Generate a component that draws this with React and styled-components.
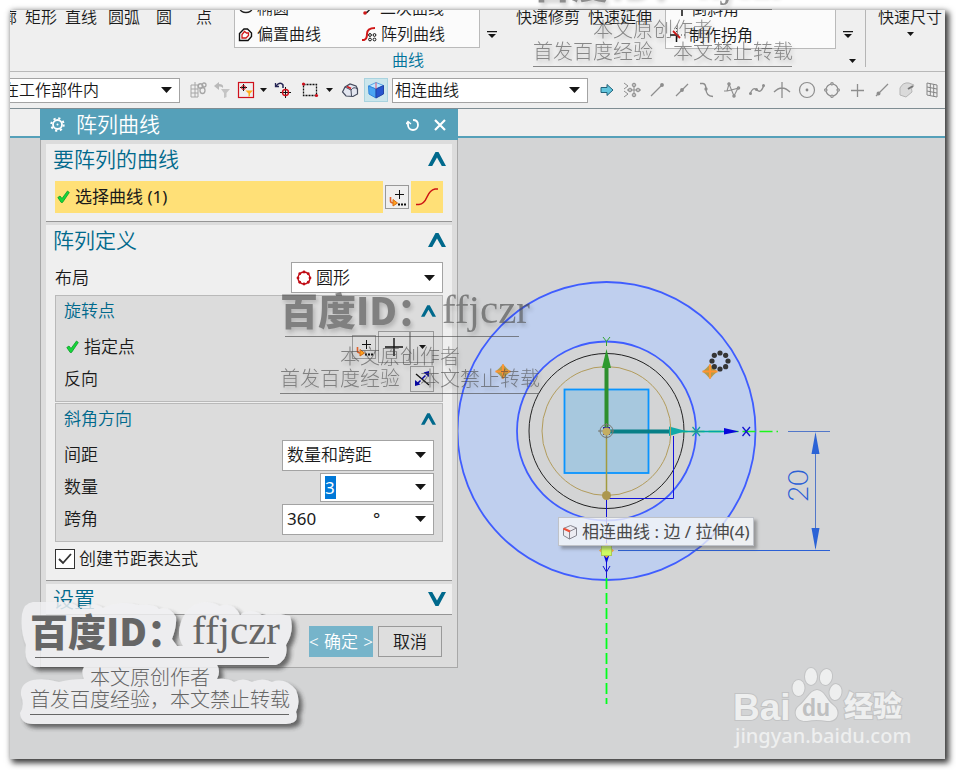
import React from "react";
import styled, { createGlobalStyle, css } from "styled-components";

const CJK = '"Noto Sans", "Noto Sans CJK SC", sans-serif';
const TEAL = "#55a0b9";
const INK = "#1a1a1a";
const LINK = "#00698c";

const GlobalStyle = createGlobalStyle`
  * { box-sizing: border-box; }
  body { margin: 0; background: #fff; overflow: hidden; }
  button, input, select { font: inherit; color: inherit; margin: 0; }
`;

const Desk = styled.main`
  position: relative;
  padding: 10px 11px 11px 10px;
  overflow: hidden;
  font: 16px/22px ${CJK};
  font-weight: 350;
  color: ${INK};
`;

const AppWindow = styled.div`
  position: relative;
  display: flex;
  flex-direction: column;
  min-height: calc(100vh - 21px);
  overflow: hidden;
  background: #efefef;
`;

const WindowShadow = styled.div`
  box-shadow: 3px 3px 6px 1px rgba(0, 0, 0, 0.75), 0 0 6px rgba(0, 0, 0, 0.15);
`;

/* ---------- ribbon ---------- */

const Ribbon = styled.header`
  display: flex;
  height: 62px;
  overflow: hidden;
  border-bottom: 1px solid #b8b8b8;
`;

const Labels = styled.div`
  display: flex;
  align-items: flex-start;
  flex: none;
  gap: ${(p) => p.$gap}px;
  width: ${(p) => p.$width}px;
`;

const RibbonButton = styled.button`
  display: flex;
  flex-direction: column;
  align-items: center;
  gap: 8px;
  padding: 0;
  margin-left: ${(p) => p.$lead || 0}px;
  border: 0;
  background: none;
  line-height: 14px;
  white-space: nowrap;
  flex: none;
`;

const GalleryGroup = styled.div`
  display: flex;
  flex-direction: column;
  flex: none;
  width: ${(p) => p.$width}px;
`;

const Gallery = styled.div`
  display: grid;
  grid-template-columns: ${(p) => p.$cols};
  grid-auto-rows: 26px;
  align-content: end;
  height: 39px;
  overflow: hidden;
  border: 1px solid #bababa;
  border-top: 0;
  background: #fbfbfb;
`;

const GalleryItem = styled.button`
  display: flex;
  align-items: center;
  gap: 4px;
  padding: 0 3px;
  border: 0;
  background: none;
  white-space: nowrap;
`;

const GroupName = styled.span`
  margin-top: 1px;
  padding-left: 158px;
  color: #00739b;
`;

const MoreColumn = styled.div`
  display: flex;
  flex-direction: column;
  gap: 16px;
  width: ${(p) => p.$width}px;
  padding: 20px 0 0 7px;
  flex: none;
`;

const BareButton = styled.button`
  display: flex;
  align-items: center;
  justify-content: center;
  width: ${(p) => p.$w || 10}px;
  height: ${(p) => p.$h || 10}px;
  padding: 0;
  border: 0;
  background: none;
  flex: none;
  margin-left: ${(p) => p.$lead || 0}px;
`;

const Divider = styled.div`
  width: 1px;
  height: 57px;
  margin-right: 12px;
  flex: none;
  background: #b5b5b5;
`;

/* ---------- selection bar ---------- */

const SelectionBar = styled.div`
  display: flex;
  align-items: center;
  height: 37px;
  border-bottom: 1px solid #7f8d93;
`;

const Combo = styled.div`
  display: grid;
  grid-template-columns: minmax(0, 1fr) 26px;
  align-items: center;
  flex: none;
  width: ${(p) => p.$width}px;
  height: ${(p) => p.$height || 31}px;
  margin: ${(p) => p.$margin || 0};
  border: 1px solid #a3a3a3;
  background: #fff;
  > svg { grid-area: 1 / 2; pointer-events: none; justify-self: center; }
`;

const Select = styled.select`
  grid-area: 1 / 1 / 2 / 3;
  width: 100%;
  height: 100%;
  padding: 0 0 0 ${(p) => p.$inset || 4}px;
  appearance: none;
  border: 0;
  outline: 0;
  background: transparent;
`;

const ComboIcon = styled.span`
  grid-area: 1 / 1;
  display: flex;
  padding-left: 4px;
  pointer-events: none;
`;

const Tool = styled.button`
  display: flex;
  align-items: center;
  justify-content: center;
  flex: none;
  width: ${(p) => p.$w || 25}px;
  height: 24px;
  padding: 0;
  border: 1px solid transparent;
  background: none;
  ${(p) => p.$on && css`border-color: #a9d3df; background: #cbe6ec;`}
`;

const Tabs = styled.div`
  height: 29px;
  border-bottom: 2px solid ${TEAL};
`;

const Canvas = styled.section`
  flex: 1;
  overflow: hidden;
  background: #d3d4d5;
  > svg { display: block; }
`;

/* ---------- dialog ---------- */

const Dialog = styled.form`
  position: absolute;
  left: 30px;
  top: 99px;
  width: 418px;
  font-size: 17px;
`;

const DialogHeader = styled.div`
  display: flex;
  align-items: center;
  height: 31px;
  padding: 0 9px 0 10px;
  background: ${TEAL};
  color: #fff;
`;

const DialogTitle = styled.h1`
  flex: 1;
  margin: 0 0 0 11px;
  font-size: 21px;
  font-weight: 350;
  line-height: 31px;
`;

const DialogBody = styled.div`
  display: flex;
  flex-direction: column;
  gap: 3px;
  padding: 4px 5px 10px;
  border: 1px solid #a8a8a8;
  border-top: 0;
  background: #dcdcdc;
`;

const Section = styled.section`
  display: flex;
  flex-direction: column;
  padding: 0 9px ${(p) => p.$bottom}px;
  border-bottom: 1px solid #959595;
  background: #efefef;
`;

const SectionHead = styled.div`
  display: flex;
  align-items: center;
  justify-content: space-between;
  height: 30px;
  margin: 0 -3px ${(p) => (p.$closed ? 0 : 7)}px -2px;
  color: ${LINK};
`;

const SectionTitle = styled.h2`
  margin: 0;
  font-size: 21px;
  font-weight: 350;
  line-height: 30px;
`;

const Row = styled.div`
  display: flex;
  align-items: center;
  gap: ${(p) => p.$gap || 0}px;
  height: ${(p) => p.$height || 32}px;
`;

const RowLabel = styled.label`
  display: flex;
  align-items: center;
  gap: 5px;
  flex: 1;
  padding-left: ${(p) => (p.$ticked ? 2 : 0)}px;
`;

const PickRow = styled.div`
  display: flex;
  align-items: center;
  gap: 5px;
  flex: 1;
  height: 32px;
  padding-left: 2px;
  background: #ffe077;
  font-weight: 400;
`;

const Group = styled.fieldset`
  margin: ${(p) => p.$top}px 0 0;
  padding: 0 8px 6px;
  border: 1px solid #b9b9b9;
  background: #dcdcdc;
`;

const GroupHead = styled.div`
  display: flex;
  align-items: center;
  justify-content: space-between;
  height: 29px;
  margin: 0 -2px 6px 0;
  color: ${LINK};
`;

const IconButton = styled.button`
  display: flex;
  align-items: center;
  justify-content: center;
  flex: none;
  width: ${(p) => p.$w || 24}px;
  height: ${(p) => p.$h || 24}px;
  padding: 0;
  border: ${(p) => (p.$hot ? 0 : "1px solid #999")};
  background: ${(p) => (p.$hot ? "#ffe077" : "transparent")};
  & + &[data-joined] { border-left: 0; }
`;

const SelectedInput = styled.input`
  width: 11px;
  height: 23px;
  margin-left: 4px;
  padding: 0;
  border: 0;
  outline: 0;
  background: #0078d7;
  color: #fff;
  font-weight: 400;
`;

const ValueCell = styled.span`
  grid-area: 1 / 1;
  display: flex;
  font-weight: 400;
`;

const AngleInput = styled.input`
  width: 90px;
  padding: 0 0 0 4px;
  border: 0;
  outline: 0;
  background: transparent;
`;

const CheckLabel = styled.label`
  display: flex;
  align-items: center;
  gap: 4px;
  height: 21px;
  margin-top: 6px;
`;

const CheckWrap = styled.span`
  display: grid;
  > * { grid-area: 1 / 1; }
  > svg { pointer-events: none; }
`;

const CheckBox = styled.input`
  width: 20px;
  height: 20px;
  appearance: none;
  border: 1px solid #333;
  background: #fff;
`;

const Footer = styled.div`
  display: flex;
  justify-content: flex-end;
  gap: 5px;
  padding: 8px 10px 0 0;
`;

const ActionButton = styled.button`
  width: 64px;
  height: 31px;
  padding: 0;
  display: flex;
  align-items: center;
  justify-content: ${(p) => (p.$primary ? "space-between" : "center")};
  border: ${(p) => (p.$primary ? "0" : "1px solid #999")};
  background: ${(p) => (p.$primary ? "#76b4ca" : "#dedede")};
  color: ${(p) => (p.$primary ? "#fff" : INK)};
`;

/* ---------- overlays ---------- */

const Tip = styled.div`
  position: absolute;
  left: 548px;
  top: 507px;
  display: flex;
  align-items: center;
  gap: 4px;
  height: 29px;
  padding: 0 4px 0 3px;
  border: 1px solid #bfc2c8;
  background: rgba(246, 247, 250, 0.78);
  box-shadow: 3px 3px 3px rgba(80, 80, 80, 0.45);
  font-size: 17px;
  font-weight: 400;
  color: #4a4a4a;
  white-space: pre;
`;

const Mark = styled.div`
  position: absolute;
  left: ${(p) => p.$x}px;
  top: ${(p) => p.$y}px;
  width: 259px;
  pointer-events: none;
  opacity: ${(p) => (p.$cloud ? 1 : 0.62)};
  text-shadow: ${(p) => (p.$cloud ? "none" : "2px 3px 4px rgba(0,0,0,0.3)")};
  color: ${(p) => (p.$cloud ? "#666" : "#484848")};
  > svg { position: absolute; left: -20px; top: -18px; }
`;

const MarkTitle = styled.div`
  position: relative;
  display: flex;
  height: 46px;
  margin: 0 20px 9px 5px;
  border-bottom: 1px solid currentColor;
  line-height: 36px;
  white-space: nowrap;
`;

const MarkId = styled.span`
  flex: none;
  width: 162px;
  margin-left: -5px;
  overflow: visible;
  font-size: 38px;
  font-weight: 900;
  font-family: "Noto Sans CJK SC", sans-serif;
`;

const MarkName = styled.span`
  font: 41px/36px "Liberation Serif", serif;
`;

const MarkLine = styled.div`
  position: relative;
  padding-left: ${(p) => p.$inset || 0}px;
  font-size: 20px;
  line-height: 22px;
  font-weight: 300;
  white-space: pre;
`;

const MarkRule = styled.div`
  position: relative;
  height: 4px;
  border-bottom: 1px solid currentColor;
`;

/* ---------- drawings ---------- */

const Svg = ({ s = 18, w = s, h = s, children, c = "#8e8e8e", sw = 1 }) => (
  <svg width={w} height={h} viewBox={`0 0 ${w} ${h}`} fill="none" stroke={c} strokeWidth={sw} aria-hidden="true">
    {children}
  </svg>
);

const Caret = ({ w = 11, h = 6 }) => (
  <svg width={w} height={h} viewBox="0 0 12 6" preserveAspectRatio="none" aria-hidden="true"><path d="M0 0H12L6 6Z" fill="#161616" /></svg>
);

const MoreCaret = () => (
  <svg width="10" height="8" viewBox="0 0 10 8" aria-hidden="true"><path d="M0 0H10V1.200H0ZM1 3H9L5 7Z" fill="#161616" /></svg>
);

const Chevron = ({ w = 18, h = 14, down }) => (
  <svg width={w} height={h} viewBox="0 0 18 14" aria-hidden="true">
    <path d={down ? "M0 0H4.200L9 8.500L13.800 0H18L10.500 14H7.500Z" : "M0 14H4.200L9 5.500L13.800 14H18L10.500 0H7.500Z"} fill="#00698c" />
  </svg>
);

const Tick = () => (
  <svg width="13" height="14" viewBox="0 0 13 14" aria-hidden="true">
    <path d="M.8 7.500L3 6L5 8.500L10.500 1L12.300 2.500L5.500 12.500L4.200 12.500Z" fill="#16d83a" stroke="#0b9a28" strokeWidth=".8" />
  </svg>
);

const PointDialog = () => (
  <Svg s={20}>
    <path d="M12.500 3v9M8 7.500h9" stroke="#111" />
    <path d="M3.500 10v4q0 2 3 2" stroke="#e0602a" strokeWidth="1.600" />
    <path d="M6 12.500L10.500 16L6 19Z" fill="#ffa41c" stroke="#d76b16" />
    <path d="M11 17.500h8" stroke="#111" strokeWidth="2" strokeDasharray="2 1" />
  </Svg>
);

const RedRing = () => (
  <Svg s={16}>
    <circle cx="8" cy="8" r="6" stroke="#c00b14" strokeWidth="1.300" />
    {[0, 45, 90, 135, 180, 225, 270, 315].map((a) => (
      <circle key={a} cx={8 + 6 * Math.cos((a * Math.PI) / 180)} cy={8 + 6 * Math.sin((a * Math.PI) / 180)} r="1.400" fill="#c00b14" stroke="none" />
    ))}
  </Svg>
);

const icons = {
  offset: (
    <Svg s={15}>
      <path d="M1.500 13.500V6.500L6 2H9.500L13.500 6V9.500L10 13.500Z" stroke="#111" strokeWidth="1.400" />
      <path d="M4 11V7.500L6.500 4.500L8.500 6H10.500V8.500L8 11Z" stroke="#d01818" strokeWidth="1.300" />
    </Svg>
  ),
  ellipse: <Svg w={15} h={14}><ellipse cx="8" cy="7.500" rx="6" ry="4" stroke="#222" strokeWidth="1.400" /></Svg>,
  conic: (
    <Svg s={15}>
      <path d="M4 12Q9 11 11 2" stroke="#222" strokeWidth="1.500" />
      <circle cx="4" cy="12" r="1.800" fill="#d01818" stroke="none" />
    </Svg>
  ),
  pattern: (
    <Svg s={16}>
      <path d="M1 14H3Q6 13 6 8Q6 2 14 2" stroke="#d01818" strokeWidth="2" />
      <g stroke="#111"><circle cx="9" cy="9" r="1.400" /><circle cx="13.500" cy="9" r="1.400" /><circle cx="9" cy="13.500" r="1.400" /><circle cx="13.500" cy="13.500" r="1.400" /></g>
    </Svg>
  ),
  chamfer: <Svg s={18}><path d="M13 2V16M13 6H9" stroke="#111" strokeWidth="1.500" /></Svg>,
  corner: (
    <Svg s={16}>
      <path d="M1 8h7M7.500 8V15" stroke="#111" strokeWidth="1.500" />
      <path d="M9 8h7M7.500 1v6" stroke="#444" strokeDasharray="1 2" />
      <path d="M4 4L11 11" stroke="#d01818" strokeWidth="1.800" />
    </Svg>
  ),
};

const tools = [
  [24, "装配", <Svg key="i" c="#a6a6a6"><path d="M2 4h7v12H2ZM2 8H9M2 12H9M6 1V16" /><circle cx="11.500" cy="5" r="2.300" strokeWidth="1.500" /><circle cx="15" cy="4" r="2" strokeWidth="1.300" /><ellipse cx="13.500" cy="9.500" rx="2.500" ry="3" strokeWidth="1.300" /></Svg>],
  [24, "重置过滤器", <Svg key="i"><path d="M1 5L6 1V3Q11 3 10 7Q9 5 6 5.500V9Z" fill="#b9b9b9" stroke="none" /><path d="M8 8H17L13.500 12V16L11 17V12Z" fill="#c4c4c4" stroke="none" /></Svg>],
  [24, "捕捉过滤", <Svg key="i" s={18}><rect x="1.500" y="1.500" width="15" height="15" stroke="#d0101c" strokeWidth="1.200" /><path d="M6.500 3v7M3 6.500h7" stroke="#111" /><circle cx="6.500" cy="6.500" r="2" stroke="#d0101c" /><path d="M8.500 9.500H16L13 12.500V15L11.500 16V12.500Z" fill="#ffae1a" stroke="none" /></Svg>],
  [11, "更多过滤", <Caret key="i" w={7} h={4} />],
  [28, "定向视图", <Svg key="i"><path d="M9 7V4Q7 1 4 3L2 5" stroke="#242454" strokeWidth="1.500" /><path d="M1.500 2V5.500H5" stroke="#242454" strokeWidth="1.300" /><path d="M11.500 6v11M6 11.500h11" stroke="#111" /><circle cx="11.500" cy="11.500" r="3" stroke="#d0101c" strokeWidth="1.400" /></Svg>],
  [25, "框选", <Svg key="i"><rect x="2.500" y="3.500" width="13" height="11" stroke="#111" strokeDasharray="2 1" strokeWidth="1.300" /><circle cx="2.500" cy="3" r="1.600" fill="#d0101c" stroke="none" /><circle cx="15.500" cy="14.500" r="1.600" fill="#d0101c" stroke="none" /></Svg>],
  [14, "更多选择", <Caret key="i" w={7} h={4} />],
  [28, "着色", <Svg key="i"><path d="M1.500 11L4 6L9 3L15 5L16.500 8V13L12 15.500L5 15Z" fill="#e3e6f0" stroke="#444a5c" strokeWidth="1.200" /><path d="M4 6L10 9L10.500 15M10 9Q13 5 16 8" stroke="#444a5c" /><path d="M6 5.500L10 7.500" stroke="#d01c20" strokeWidth="1.700" /></Svg>],
];

const snapTools = [
  ["捕捉点", <Svg key="i"><path d="M1 2l4 3-4 3M1 10l4 3-4 3" /><path d="M11 2v14M4 9h14" /><circle cx="11" cy="4" r="1.800" /><circle cx="11" cy="14" r="1.800" /><circle cx="7" cy="9" r="1.800" /><circle cx="15" cy="9" r="1.800" /></Svg>],
  ["端点", <Svg key="i" sw={1.2}><path d="M3 15L14 4" /><circle cx="14" cy="4" r="1.300" fill="#8a8a8a" /></Svg>],
  ["中点", <Svg key="i" sw={1.2}><path d="M3 15L15 3" /><circle cx="9" cy="9" r="1.300" fill="#8a8a8a" /></Svg>],
  ["控制点", <Svg key="i" sw={1.3}><path d="M2 2.500H5Q8 3 8 8Q8 15 15 15.500" /><circle cx="8" cy="8" r="1" fill="#8a8a8a" /></Svg>],
  ["极点", <Svg key="i" sw={1.1}><path d="M1 10H4L6 3L11 15L15 7M4 10L16 7" /><circle cx="6" cy="3" r="1.200" fill="#999" /><circle cx="11" cy="15" r="1.200" fill="#999" /><circle cx="15.500" cy="7" r="1.200" fill="#999" /></Svg>],
  ["定义点", <Svg key="i" sw={1.4}><path d="M2 13Q5 5 9 9T16 4" /><circle cx="2.500" cy="12.500" r=".8" /><circle cx="8.500" cy="8.500" r=".8" /><circle cx="15.500" cy="4.500" r=".8" /></Svg>],
  ["交点", <Svg key="i" sw={1.3}><path d="M9 1V17M1 11Q9 3 17 11" /></Svg>],
  ["圆心", <Svg key="i" sw={1.2}><circle cx="9" cy="9" r="7.500" /><circle cx="9" cy="9" r="1.400" fill="#888" stroke="none" /></Svg>],
  ["象限点", <Svg key="i" sw={1.2}><circle cx="9" cy="9" r="6" /><circle cx="9" cy="2.800" r="1.200" fill="#efefef" /><circle cx="9" cy="15.200" r="1.200" fill="#efefef" /><circle cx="2.800" cy="9" r="1.200" fill="#efefef" /><circle cx="15.200" cy="9" r="1.200" fill="#efefef" /></Svg>],
  ["现有点", <Svg key="i" sw={1.3}><path d="M9.500 3V16M3 9.500H16" /></Svg>],
  ["曲线上的点", <Svg key="i" sw={1.2}><path d="M3 15L15 3" /><circle cx="5.500" cy="12.500" r="1.400" fill="#8a8a8a" /></Svg>],
  ["面上的点", <Svg key="i" c="#b5b5b5"><path d="M2 7Q5 1 11 2L16 4Q12 8 14 11L8 16L2 14Z" fill="#dadada" /><path d="M10 8L15 5" stroke="#777" strokeWidth="2" /></Svg>],
  ["有界栅格", <Svg key="i" c="#858585"><path d="M4 2L14 4V16L4 14ZM7.300 2.700V14.700M10.700 3.300V15.300M4 6L14 8M4 10L14 12" /></Svg>],
];

const Gear = () => (
  <Svg s={15}>
    <circle cx="7.500" cy="7.500" r="4.500" stroke="#fff" strokeWidth="1.800" />
    <circle cx="7.500" cy="7.500" r="6.200" stroke="#fff" strokeWidth="2" strokeDasharray="2.200 2.669" />
    <circle cx="7.500" cy="7.500" r="1" fill="#fff" stroke="none" />
  </Svg>
);

const Star = ({ x }) => (
  <g transform={`translate(${x} 371.500)`}>
    <path d="M-7.500 0L-3.500 -3.500L0 -7.500L3.500 -3.500L7.500 0L3.500 3.500L0 7.500L-3.500 3.500Z" fill="#b69a49" />
    <path d="M-7.500 0H7.500M0 -7V7" stroke="#ff9430" strokeWidth="2" />
  </g>
);

const Model = () => (
  <svg width="935" height="621" viewBox="10 138 935 621" fill="none" role="img" aria-label="模型视图">
    <circle cx="606.500" cy="431" r="149" fill="#bfcfee" stroke="#3f5dff" strokeWidth="1.800" />
    <circle cx="606.500" cy="431" r="89.500" fill="#d3d4d5" stroke="#3f5dff" strokeWidth="1.800" />
    <circle cx="606.500" cy="431" r="77.500" stroke="#222" />
    <circle cx="606.500" cy="431" r="64.500" stroke="#b29c5c" />
    <rect x="564.500" y="389.500" width="84" height="83.500" fill="#a7c8de" stroke="#0994ff" strokeWidth="1.800" />
    <path d="M606.500 431.500H778" stroke="#1cf51c" strokeWidth="1.600" strokeDasharray="13 4" />
    <path d="M606.500 578V704" stroke="#00ff1c" strokeWidth="1.800" strokeDasharray="11 4" />
    <path d="M606.500 431.500H728" stroke="#00a6a6" strokeWidth="1.500" />
    <path d="M608 431.500H672" stroke="#087f86" strokeWidth="4" />
    <path d="M669 426.500L686 431L669 436Z" fill="#10aaa8" />
    <path d="M670.500 424V438" stroke="#b29c5c" />
    <path d="M607 498.500H673.500V436" stroke="#1414dc" />
    <path d="M606.500 495V578" stroke="#1111d6" />
    <path d="M606.500 431V494" stroke="#a29b3e" strokeWidth="1.500" />
    <path d="M606.500 430V365" stroke="#2d8f2d" strokeWidth="4" />
    <path d="M602 368L606.500 349L611 368Z" fill="#2e9a2e" />
    <path d="M603 337L606.500 341.500L610 337M606.500 341.500V346" stroke="#31a531" />
    <circle cx="606.500" cy="431" r="6.500" stroke="#77776e" />
    <path d="M598 431H614M606.500 423V439" stroke="#77776e" />
    <path d="M603 427H610V435H603Z" fill="#2222a0" />
    <circle cx="606.500" cy="431.500" r="4" fill="#c4ad62" />
    <circle cx="606.500" cy="495.500" r="4.500" fill="#ac974e" />
    <path d="M692.500 427L700 436M700 427L692.500 436M691 431.500H702" stroke="#179a9a" strokeWidth="1.200" />
    <path d="M724 428L739 431.500L724 434.500Z" fill="#0808dc" />
    <path d="M742.500 427L750 436M750 427L742.500 436" stroke="#1212d0" strokeWidth="1.300" />
    <path d="M603 566L606.500 572L610 566M606.500 572V578" stroke="#1515ce" />
    <path d="M604 556L606.500 564L609 556Z" fill="#0808dc" />
    <path d="M599 550.500L603 547L606.500 543L610 547L614 550.500L610 554L606.500 558L603 554Z" fill="#f7a344" />
    <rect x="601.500" y="545.500" width="10" height="10" fill="#cffb62" stroke="#abc957" />
    <path d="M618 550.500H830" stroke="#2b60d5" />
    <path d="M788 431.500H830M815.500 434V548" stroke="#5277c9" />
    <path d="M811.500 454L815.500 432L819.500 454ZM811.500 528L815.500 550L819.500 528Z" fill="#2b63d6" />
    <text transform="rotate(-90 808 502)" x="808" y="502" fill="#2b60d5" fontFamily="Liberation Sans Narrow, Lato" fontWeight="300" fontSize="28">20</text>
    <Star x={503} />
    <Star x={710} />
    {[0, 45, 90, 135, 180, 225, 270, 315].map((a) => (
      <circle key={a} cx={720 + 8 * Math.cos((a * Math.PI) / 180)} cy={361 + 8 * Math.sin((a * Math.PI) / 180)} r="2.600" fill="#353535" />
    ))}
    <g fill="#eeefef" stroke="#c2c3c4" strokeWidth="2" paintOrder="stroke">
      <ellipse cx="798.500" cy="688" rx="6" ry="8" />
      <ellipse cx="811" cy="676.500" rx="6" ry="8.500" />
      <ellipse cx="826" cy="677" rx="6" ry="8" transform="rotate(12 826 677)" />
      <ellipse cx="835.500" cy="692" rx="6" ry="8" transform="rotate(8 835 692)" />
      <path d="M817 690C825 691 826 700 833 705C841 711 838 722 827 721Q816 719 807 721C795 722 793 711 799 706C807 700 809 691 817 690Z" />
      <text x="733" y="720" fontFamily="Liberation Sans" fontWeight="700" fontSize="37">Bai</text>
      <text x="844" y="717" fontFamily="Noto Sans CJK SC" fontWeight="900" fontSize="29">经验</text>
    </g>
    <text x="735" y="743" fill="#eeefef" fontFamily="Noto Sans" fontWeight="500" fontSize="20">jingyan.baidu.com</text>
    <text x="802" y="716" fill="#bfc0c1" fontFamily="Liberation Sans" fontWeight="700" fontSize="23">du</text>
  </svg>
);

const Cloud = () => (
  <svg width="310" height="150" viewBox="10 595 310 150" aria-hidden="true">
    <defs>
      <filter id="cloudShadow" x="-10%" y="-10%" width="120%" height="125%">
        <feDropShadow dx="4" dy="4" stdDeviation="2" floodColor="#333" floodOpacity=".8" />
      </filter>
    </defs>
    <g filter="url(#cloudShadow)" opacity=".84">
      <path
        fill="#f1f1f3"
        d="M33 603H68Q75 605 81 610Q91 601 103 609Q120 601 138 606Q155 605 159 610Q170 607 176 618Q177 627 172 640L177 647H183Q177 637 180 627Q185 605 205 603Q213 603 220 607Q233 602 240 616Q250 608 262 616Q273 612 290 617Q295 632 286 646Q289 661 276 666H217Q221 672 217 680Q228 679 234 683Q243 678 252 683Q263 678 272 683Q285 678 296 691Q301 703 296 713Q300 724 286 725H33Q21 725 20 714Q25 707 21 696Q20 684 33 681Q45 679 59 683Q70 680 84 680Q81 673 84 668H35Q23 664 26 646Q20 632 22 615Q24 604 33 603Z"
      />
    </g>
  </svg>
);

function Watermark({ x, y, cloud }) {
  return (
    <Mark $x={x} $y={y} $cloud={cloud} aria-hidden="true">
      {cloud && <Cloud />}
      <MarkTitle>
        <MarkId>百度ID：</MarkId>
        <MarkName>ffjczr</MarkName>
      </MarkTitle>
      <MarkLine $inset={60}>本文原创作者</MarkLine>
      <MarkLine>{cloud ? "首发百度经验，本文禁止转载" : "首发百度经验　本文禁止转载"}</MarkLine>
      <MarkRule />
    </Mark>
  );
}

function RibbonBar() {
  return (
    <Ribbon>
      <Labels $gap={0} $width={224}>
        <RibbonButton $lead={-25}>轮廓</RibbonButton>
        <RibbonButton $lead={8}>矩形</RibbonButton>
        <RibbonButton $lead={8}>直线</RibbonButton>
        <RibbonButton $lead={11}>圆弧</RibbonButton>
        <RibbonButton $lead={16}>圆</RibbonButton>
        <RibbonButton $lead={24}>点</RibbonButton>
      </Labels>
      <GalleryGroup $width={246}>
        <Gallery $cols="123px 1fr">
          <GalleryItem>{icons.ellipse}椭圆</GalleryItem>
          <GalleryItem>{icons.conic}二次曲线</GalleryItem>
          <GalleryItem>{icons.offset}偏置曲线</GalleryItem>
          <GalleryItem>{icons.pattern}阵列曲线</GalleryItem>
        </Gallery>
        <GroupName>曲线</GroupName>
      </GalleryGroup>
      <MoreColumn $width={36}>
        <BareButton aria-label="更多曲线"><MoreCaret /></BareButton>
      </MoreColumn>
      <Labels $gap={8} $width={149}>
        <RibbonButton>快速修剪</RibbonButton>
        <RibbonButton>快速延伸</RibbonButton>
      </Labels>
      <GalleryGroup $width={171}>
        <Gallery $cols="1fr">
          <GalleryItem>{icons.chamfer}倒斜角</GalleryItem>
          <GalleryItem>{icons.corner}制作拐角</GalleryItem>
        </Gallery>
      </GalleryGroup>
      <MoreColumn $width={29}>
        <BareButton aria-label="更多编辑"><MoreCaret /></BareButton>
        <BareButton $lead={4} aria-label="组选项"><Caret w={7} h={4} /></BareButton>
      </MoreColumn>
      <Divider />
      <Labels $gap={0} $width={67}>
        <RibbonButton>快速尺寸<Caret w={7} h={4} /></RibbonButton>
      </Labels>
    </Ribbon>
  );
}

function Tools() {
  return (
    <SelectionBar>
      <Combo $width={182} $height={25} $margin="0 6px 0 -12px">
        <Select $inset={4} aria-label="选择范围"><option>在工作部件内</option></Select>
        <Caret />
      </Combo>
      {tools.map(([w, label, icon]) => <Tool key={label} $w={w} aria-label={label}>{icon}</Tool>)}
      <Tool $w={24} $on aria-label="体">
        <Svg>
          <path d="M1.500 5L9 1.500L16.500 4.500L9 8Z" fill="#bfe7ff" stroke="#5aa4e6" />
          <path d="M1.500 5L9 8V17L2 13Z" fill="#4aa5f3" stroke="#3185db" />
          <path d="M9 8L16.500 4.500V13L9 17Z" fill="#2756cf" stroke="#2345a5" />
          <path d="M9 1.500V8" stroke="#e0506a" />
        </Svg>
      </Tool>
      <Combo $width={196} $height={25} $margin="0 6px 0 4px">
        <Select $inset={2} aria-label="曲线规则"><option>相连曲线</option></Select>
        <Caret />
      </Combo>
      <Tool $w={25} aria-label="在相交处停止">
        <Svg><path d="M3 6.500H9V3.500L15 9L9 14.500V11.500H3Z" fill="#62c5dd" stroke="#22637a" /></Svg>
      </Tool>
      {snapTools.map(([label, icon]) => <Tool key={label} aria-label={label}>{icon}</Tool>)}
    </SelectionBar>
  );
}

function PatternDialog() {
  return (
    <Dialog onSubmit={(e) => e.preventDefault()}>
      <DialogHeader>
        <BareButton type="button" $w={15} $h={20} aria-label="选项"><Gear /></BareButton>
        <DialogTitle>阵列曲线</DialogTitle>
        <BareButton type="button" $w={18} $h={20} aria-label="重置">
          <Svg s={14} c="#fff" sw={1.8}><path d="M7 2Q12 2 12 7A5 5 0 0 1 2 7V4" /><path d="M0 6L2 3.500L5 6" strokeWidth="1.300" /></Svg>
        </BareButton>
        <BareButton type="button" $w={18} $h={20} $lead={9} aria-label="关闭">
          <Svg s={14} c="#fff" sw={2.2}><path d="M2 2L12 12M12 2L2 12" /></Svg>
        </BareButton>
      </DialogHeader>
      <DialogBody>
        <Section $bottom={8}>
          <SectionHead><SectionTitle>要阵列的曲线</SectionTitle><BareButton type="button" $w={18} $h={14} aria-label="折叠"><Chevron /></BareButton></SectionHead>
          <Row $gap={2}>
            <PickRow><Tick />选择曲线 (1)</PickRow>
            <IconButton type="button" aria-label="点对话框"><PointDialog /></IconButton>
            <IconButton type="button" $w={32} $h={32} $hot aria-label="曲线">
              <Svg s={24} c="#cc1414" sw={1.5}><path d="M1 19.500H4Q9 19 12 12T20 4H23" /></Svg>
            </IconButton>
          </Row>
        </Section>
        <Section $bottom={11}>
          <SectionHead><SectionTitle>阵列定义</SectionTitle><BareButton type="button" $w={18} $h={14} aria-label="折叠"><Chevron /></BareButton></SectionHead>
          <Row $height={31}>
            <RowLabel htmlFor="layout">布局</RowLabel>
            <Combo $width={152}>
              <ComboIcon><RedRing /></ComboIcon>
              <Select id="layout" $inset={24}><option>圆形</option></Select>
              <Caret />
            </Combo>
          </Row>
          <Group $top={2}>
            <GroupHead>旋转点<BareButton type="button" $w={15} $h={12} aria-label="折叠"><Chevron w={15} h={12} /></BareButton></GroupHead>
            <Row $gap={2}>
              <RowLabel as="span" $ticked><Tick />指定点</RowLabel>
              <IconButton type="button" aria-label="点对话框"><PointDialog /></IconButton>
              <Row>
                <IconButton type="button" $w={32} $h={32} aria-label="自动判断的点">
                  <Svg c="#111" sw={1.4}><path d="M9 0V18M0 9H18" /></Svg>
                </IconButton>
                <IconButton type="button" data-joined $w={24} $h={32} aria-label="点类型"><Caret w={7} h={4} /></IconButton>
              </Row>
            </Row>
            <Row>
              <RowLabel as="span">反向</RowLabel>
              <IconButton type="button" $h={26} aria-label="反向">
                <Svg s={18}><path d="M3 4L16 15" stroke="#111" strokeWidth="1.300" /><path d="M4 14L14 4" stroke="#0808a0" strokeWidth="1.500" strokeDasharray="5 2" /><path d="M16 1V7L10.500 2.500ZM2 16V10L7.500 14.500Z" fill="#0808a0" stroke="none" /></Svg>
              </IconButton>
            </Row>
          </Group>
          <Group $top={1}>
            <GroupHead>斜角方向<BareButton type="button" $w={15} $h={12} aria-label="折叠"><Chevron w={15} h={12} /></BareButton></GroupHead>
            <Row>
              <RowLabel htmlFor="spacing">间距</RowLabel>
              <Combo $width={152}><Select id="spacing"><option>数量和跨距</option></Select><Caret /></Combo>
            </Row>
            <Row>
              <RowLabel htmlFor="count">数量</RowLabel>
              <Combo $width={114} $height={29}><ValueCell><SelectedInput id="count" defaultValue="3" /></ValueCell><Caret /></Combo>
            </Row>
            <Row>
              <RowLabel htmlFor="angle">跨角</RowLabel>
              <Combo $width={152}><ValueCell><AngleInput id="angle" defaultValue="360" />°</ValueCell><Caret /></Combo>
            </Row>
          </Group>
          <CheckLabel>
            <CheckWrap>
              <CheckBox type="checkbox" defaultChecked />
              <Svg s={20} c="#333" sw={1.8}><path d="M4 10L8 14L16 5" /></Svg>
            </CheckWrap>
            创建节距表达式
          </CheckLabel>
        </Section>
        <Section $bottom={0}>
          <SectionHead $closed><SectionTitle>设置</SectionTitle><BareButton type="button" $w={18} $h={14} aria-label="展开"><Chevron down /></BareButton></SectionHead>
        </Section>
        <Footer>
          <ActionButton $primary><span>&lt;</span>确定<span>&gt;</span></ActionButton>
          <ActionButton type="button">取消</ActionButton>
        </Footer>
      </DialogBody>
    </Dialog>
  );
}

export default function App() {
  return (
    <Desk>
      <GlobalStyle />
      <WindowShadow>
        <AppWindow>
          <RibbonBar />
          <Tools />
          <Tabs />
          <Canvas><Model /></Canvas>
          <PatternDialog />
          <Tip role="tooltip">
            <Svg s={16} c="#85858f"><path d="M1.500 4.500L8.500 1.500L14.500 4V11.500L7.500 15L1.500 11.500ZM7.500 7.500V15M7.500 7.500L14.500 4" fill="#ececf2" /><path d="M1.500 4.500L8 7.500" stroke="#ee5138" strokeWidth="2" /></Svg>
            相连曲线 : 边 / 拉伸(4)
          </Tip>
        </AppWindow>
      </WindowShadow>
      <Watermark x={533} y={-36} />
      <Watermark x={280} y={291} />
      <Watermark x={30} y={612} cloud />
    </Desk>
  );
}
